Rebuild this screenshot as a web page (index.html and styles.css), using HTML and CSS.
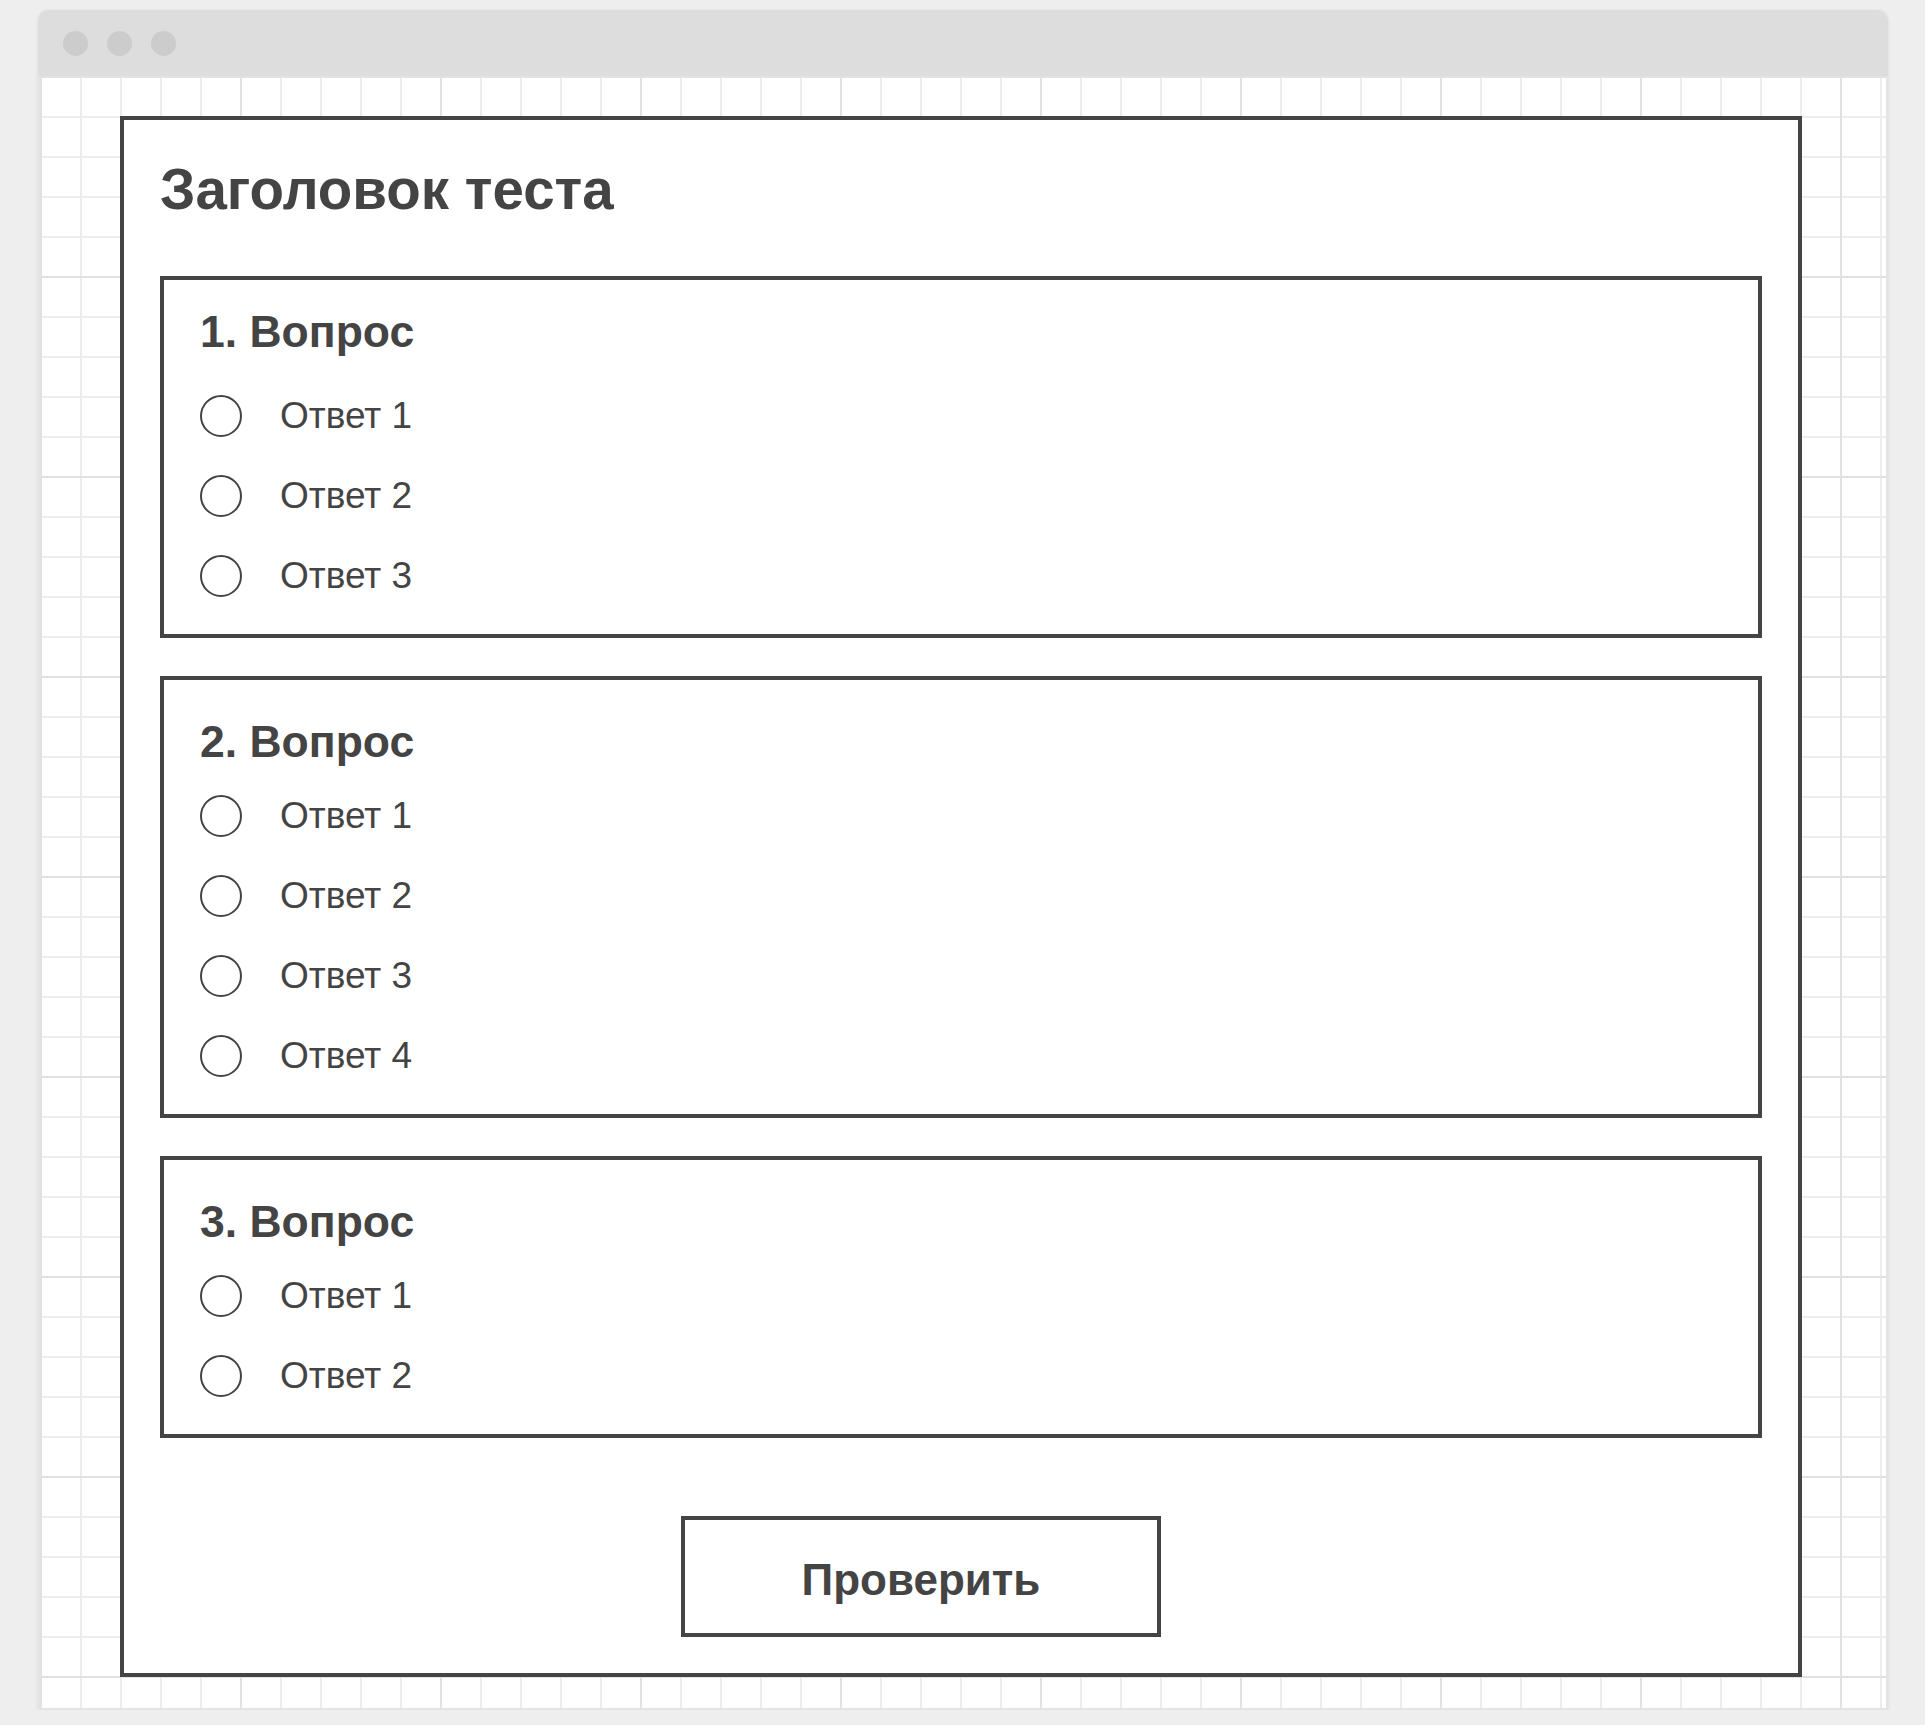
FILE: index.html
```html
<!DOCTYPE html>
<html lang="ru">
<head>
<meta charset="UTF-8">
<meta name="viewport" content="width=device-width, initial-scale=1.0">
<title>Заголовок теста</title>
<link rel="stylesheet" href="styles.css">
</head>
<body>

<div class="window">
    <div class="window-bar">
        <span class="dot"></span>
        <span class="dot"></span>
        <span class="dot"></span>
    </div>
    <div class="window-body">
        <form class="quiz">
            <h1>Заголовок теста</h1>

            <div class="question question-first">
                <h3>1. Вопрос</h3>
                <label class="answer"><input type="radio" name="q1"><span>Ответ 1</span></label>
                <label class="answer"><input type="radio" name="q1"><span>Ответ 2</span></label>
                <label class="answer"><input type="radio" name="q1"><span>Ответ 3</span></label>
            </div>

            <div class="question">
                <h3>2. Вопрос</h3>
                <label class="answer"><input type="radio" name="q2"><span>Ответ 1</span></label>
                <label class="answer"><input type="radio" name="q2"><span>Ответ 2</span></label>
                <label class="answer"><input type="radio" name="q2"><span>Ответ 3</span></label>
                <label class="answer"><input type="radio" name="q2"><span>Ответ 4</span></label>
            </div>

            <div class="question">
                <h3>3. Вопрос</h3>
                <label class="answer"><input type="radio" name="q3"><span>Ответ 1</span></label>
                <label class="answer"><input type="radio" name="q3"><span>Ответ 2</span></label>
            </div>

            <div class="actions">
                <button type="button" class="check-btn">Проверить</button>
            </div>
        </form>
    </div>
</div>

</body>
</html>
```

FILE: styles.css
```css
body {
    font-family: "Liberation Sans", Arial, sans-serif;
    background-color: #eeeeee;
    margin: 0;
    padding: 10px 37px 0 38px;
    color: #444444;
}

.window {
    height: 1700px;
    display: flex;
    flex-direction: column;
    border-radius: 10px 10px 0 0;
    box-shadow: 0 1px 4px rgba(0, 0, 0, 0.08);
}

.window-bar {
    height: 66px;
    flex-shrink: 0;
    display: flex;
    align-items: center;
    gap: 19px;
    padding-left: 25px;
    background-color: #dddddd;
    border-radius: 10px 10px 0 0;
}

.dot {
    width: 25px;
    height: 25px;
    border-radius: 50%;
    background-color: #cccccc;
}

.window-body {
    flex: 1;
    padding: 40px 0 0 80px;
    border: 2px solid #e4e4e4;
    border-top: none;
    background-color: #ffffff;
    background-image:
        linear-gradient(to right, #e2e2e2 2px, transparent 2px),
        linear-gradient(to bottom, #e2e2e2 2px, transparent 2px),
        linear-gradient(to right, #ededed 2px, transparent 2px),
        linear-gradient(to bottom, #ededed 2px, transparent 2px);
    background-size: 200px 200px, 200px 200px, 40px 40px, 40px 40px;
}

.quiz {
    width: 1682px;
    box-sizing: border-box;
    padding: 36px;
    border: 4px solid #444444;
    background-color: #ffffff;
}

h1 {
    margin: 0 0 52px;
    font-size: 56.5px;
    line-height: 68px;
    font-weight: bold;
}

.question {
    display: flex;
    flex-direction: column;
    gap: 36px;
    padding: 36px;
    margin-bottom: 38px;
    border: 4px solid #444444;
}

.question h3 {
    margin: 0 0 -10px;
    font-size: 44.5px;
    line-height: 52px;
}

.question-first h3 {
    margin: -10px 0 0;
}

.answer {
    display: flex;
    align-items: center;
    gap: 38px;
    height: 44px;
    font-size: 37px;
    cursor: pointer;
}

.answer input {
    appearance: none;
    -webkit-appearance: none;
    width: 42px;
    height: 42px;
    margin: 0;
    border: 2px solid #444444;
    border-radius: 50%;
    background-color: #ffffff;
}

.answer input:checked {
    background: radial-gradient(#444444 40%, #ffffff 44%);
}

.actions {
    display: flex;
    justify-content: center;
    padding: 40px 80px 0 0;
}

.check-btn {
    width: 480px;
    height: 121px;
    padding: 6px 0 0;
    border: 4px solid #444444;
    background-color: #ffffff;
    color: #444444;
    font-family: "Liberation Sans", Arial, sans-serif;
    font-size: 44px;
    font-weight: bold;
    cursor: pointer;
}
```
